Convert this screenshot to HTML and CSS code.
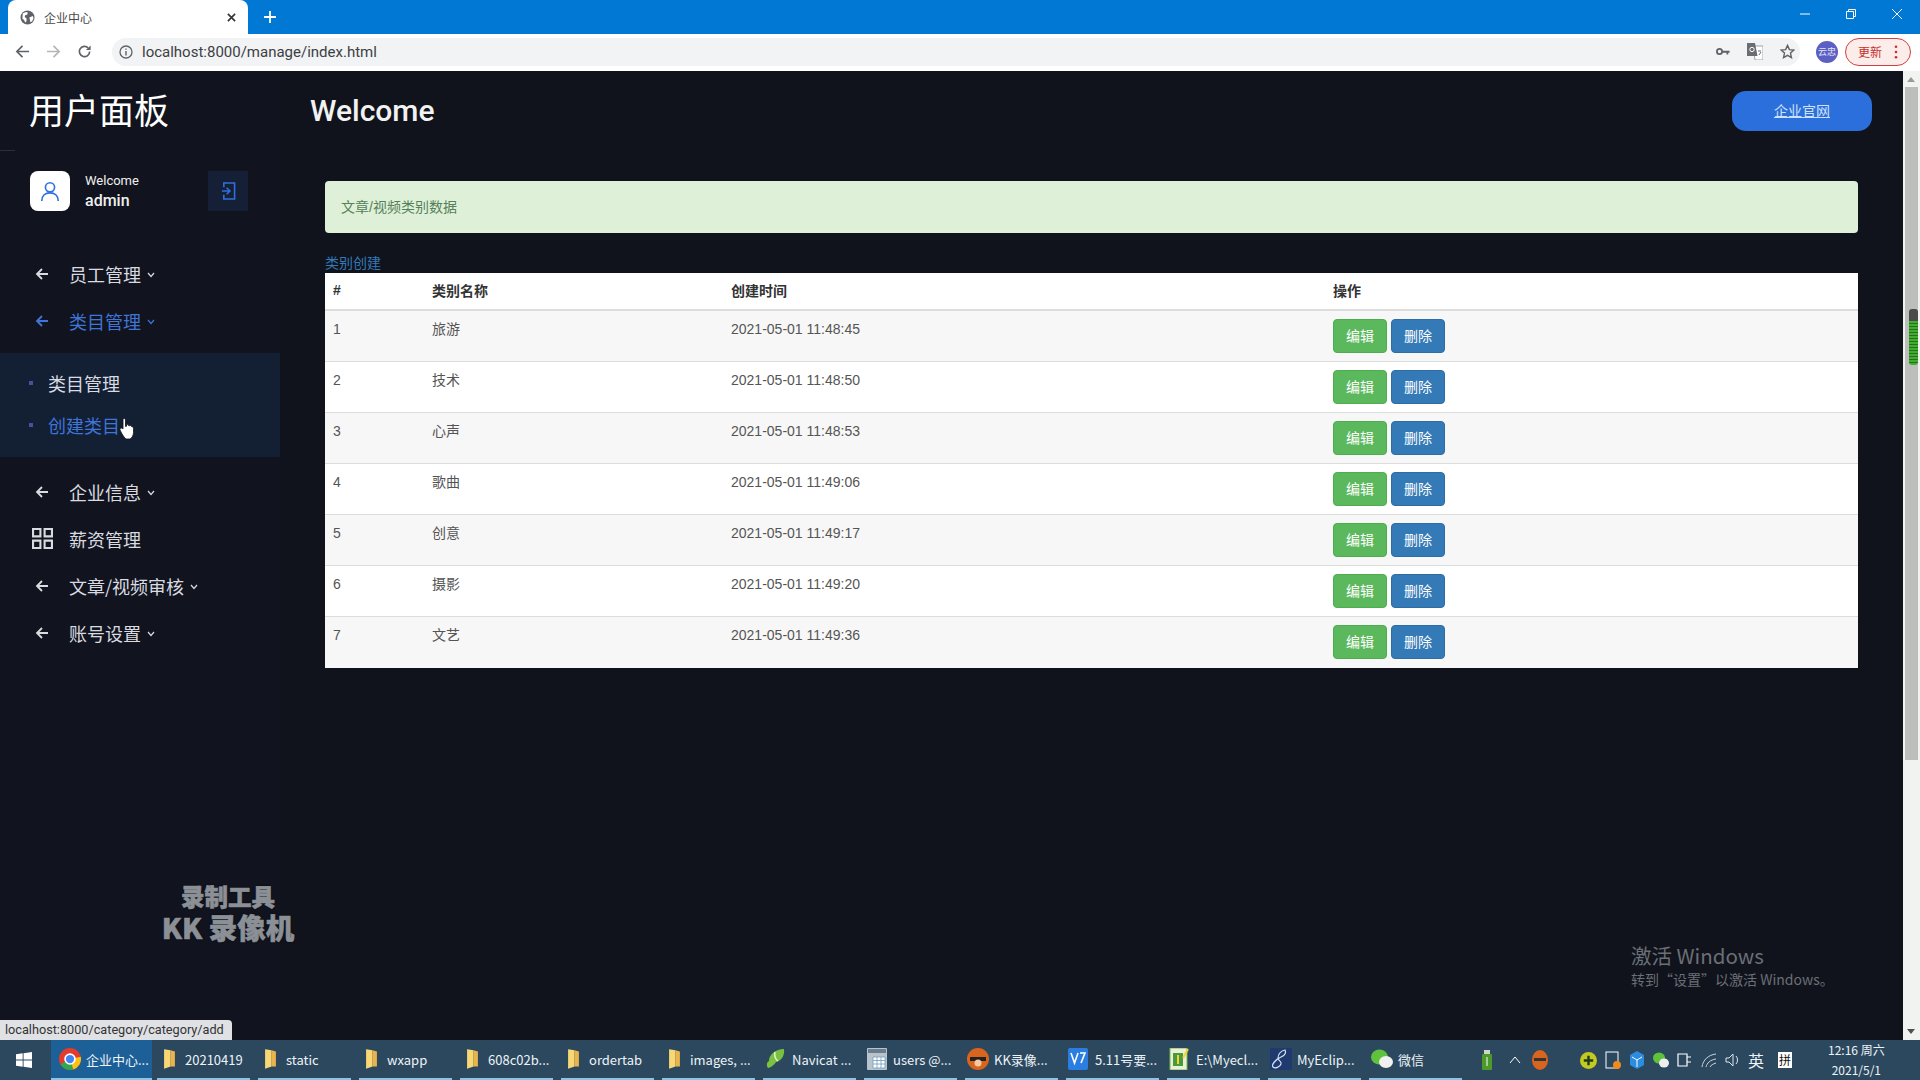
FILE: index.html
```html
<!DOCTYPE html>
<html lang="zh-CN">
  <head>
    <meta charset="UTF-8" />
    <title>企业中心</title>
    <link rel="stylesheet" href="styles.css">
  </head>
  <body>
    <!-- browser chrome -->
    <div class="tabstrip">
      <div class="tab">
        <svg class="tab-globe" viewBox="0 0 16 16"><circle cx="8" cy="8" r="7.5" fill="#5f6368"/><path d="M3 3.500l3.500-1.500 2 1-1 2-2 .5-.5 2 2 1.500v2.500l-1 2-2-3-1.500-1.500zM10 8l3.500-1.500 1 2-1.500 3.500-2 1-.5-3z" fill="#fff"/></svg>
        <span class="tab-title">企业中心</span>
        <svg class="tab-close" viewBox="0 0 10 10"><path d="M1 1l8 8M9 1l-8 8" stroke="#333" stroke-width="1.800"/></svg>
      </div>
      <svg class="tab-new" viewBox="0 0 12 12"><path d="M6 0v12M0 6h12" stroke="#fff" stroke-width="1.800"/></svg>
      <div class="win-buttons">
        <svg viewBox="0 0 12 12"><path d="M1 6h10" stroke="#fff" stroke-width="1"/></svg>
        <svg viewBox="0 0 12 12"><path d="M1.500 3.500h7v7h-7zM3.500 3.500v-2h7v7h-2" fill="none" stroke="#fff" stroke-width="1"/></svg>
        <svg viewBox="0 0 12 12"><path d="M1 1l10 10M11 1L1 11" stroke="#fff" stroke-width="1"/></svg>
      </div>
    </div>
    <div class="toolbar">
      <svg class="nav-icon" viewBox="0 0 16 16"><path d="M15 8H2M8 2L2 8l6 6" fill="none" stroke="#5f6368" stroke-width="1.800"/></svg>
      <svg class="nav-icon" viewBox="0 0 16 16"><path d="M1 8h13M8 2l6 6-6 6" fill="none" stroke="#b4b6b9" stroke-width="1.800"/></svg>
      <svg class="nav-icon" viewBox="0 0 16 16"><path d="M13.500 8a5.500 5.500 0 1 1-1.600-3.900" fill="none" stroke="#5f6368" stroke-width="1.800"/><path d="M14.500 1.500v5h-5z" fill="#5f6368"/></svg>
      <div class="omnibox">
        <svg class="info-icon" viewBox="0 0 14 14"><circle cx="7" cy="7" r="6" fill="none" stroke="#5f6368" stroke-width="1.300"/><path d="M7 6v4.500M7 3.500v1.300" stroke="#5f6368" stroke-width="1.400"/></svg>
        <span class="url">localhost:8000/manage/index.html</span>
        <div class="omni-right">
          <svg class="key-icon" viewBox="0 0 16 10"><circle cx="4" cy="5" r="3" fill="none" stroke="#5f6368" stroke-width="2"/><path d="M7 4h8.500v2.500h-1.500v2h-2v-2H7z" fill="#5f6368"/></svg>
          <svg class="trans-icon" viewBox="0 0 16 17"><path d="M6 3h10v14H8z" fill="#fff" stroke="#8a8d91" stroke-width=".8"/><path d="M0 0h8l2.500 13H0z" fill="#6a6d71"/><circle cx="5" cy="6.500" r="2.200" fill="none" stroke="#fff"/><path d="M11 8h3M12 12l2-3" stroke="#6a6d71"/></svg>
          <svg class="star-icon" viewBox="0 0 16 16"><path d="M8 1.500l2 4.500 4.800.5-3.600 3.200 1 4.800L8 12.100 3.800 14.500l1-4.800L1.200 6.500 6 6z" fill="none" stroke="#5f6368" stroke-width="1.500"/></svg>
        </div>
      </div>
      <div class="avatar-chip">云忠</div>
      <div class="update-chip">
        <span>更新</span>
        <svg viewBox="0 0 4 16"><circle cx="2" cy="2" r="1.500"/><circle cx="2" cy="8" r="1.500"/><circle cx="2" cy="14" r="1.500"/></svg>
      </div>
    </div>

    <div class="page">
      <aside class="sidebar">
        <h2 class="brand">用户面板</h2>
        <div class="brand-rule"></div>
        <div class="user-box">
          <div class="user-pic">
            <svg viewBox="0 0 24 24"><circle cx="12" cy="8" r="5" fill="none" stroke="#2f6fe0" stroke-width="1.800"/><path d="M3 23c0-6 4-9 9-9s9 3 9 9" fill="none" stroke="#2f6fe0" stroke-width="1.800"/></svg>
          </div>
          <div class="user-text">
            <span class="user-hello">Welcome</span>
            <strong class="user-name">admin</strong>
          </div>
          <div class="user-exit">
            <svg viewBox="0 0 16 20"><path d="M3 6V1.500h11.500v17H3V14M1 10h8M6 6.500L9.500 10 6 13.500" fill="none" stroke="#2f6fe0" stroke-width="1.700"/></svg>
          </div>
        </div>
        <ul class="menu">
          <li class="menu-item">
            <svg class="menu-arrow" viewBox="0 0 14 14"><path d="M13 7H2M7 2L2 7l5 5" fill="none" stroke="currentColor" stroke-width="1.800"/></svg>
            <span>员工管理</span><svg class="menu-caret" viewBox="0 0 8 6"><path d="M1 1l3 3.500L7 1" fill="none" stroke="currentColor" stroke-width="1.200"/></svg>
          </li>
          <li class="menu-item active">
            <svg class="menu-arrow" viewBox="0 0 14 14"><path d="M13 7H2M7 2L2 7l5 5" fill="none" stroke="currentColor" stroke-width="1.800"/></svg>
            <span>类目管理</span><svg class="menu-caret" viewBox="0 0 8 6"><path d="M1 1l3 3.500L7 1" fill="none" stroke="currentColor" stroke-width="1.200"/></svg>
          </li>
          <li class="submenu">
            <div class="sub-item">类目管理</div>
            <div class="sub-item current">创建类目</div>
          </li>
          <li class="menu-item">
            <svg class="menu-arrow" viewBox="0 0 14 14"><path d="M13 7H2M7 2L2 7l5 5" fill="none" stroke="currentColor" stroke-width="1.800"/></svg>
            <span>企业信息</span><svg class="menu-caret" viewBox="0 0 8 6"><path d="M1 1l3 3.500L7 1" fill="none" stroke="currentColor" stroke-width="1.200"/></svg>
          </li>
          <li class="menu-item">
            <svg class="menu-grid" viewBox="0 0 20 20"><path d="M1 1h7v7H1zM12 1h7v7h-7zM1 12h7v7H1zM12 12h7v7h-7z" fill="none" stroke="currentColor" stroke-width="2"/></svg>
            <span>薪资管理</span>
          </li>
          <li class="menu-item">
            <svg class="menu-arrow" viewBox="0 0 14 14"><path d="M13 7H2M7 2L2 7l5 5" fill="none" stroke="currentColor" stroke-width="1.800"/></svg>
            <span>文章/视频审核</span><svg class="menu-caret" viewBox="0 0 8 6"><path d="M1 1l3 3.500L7 1" fill="none" stroke="currentColor" stroke-width="1.200"/></svg>
          </li>
          <li class="menu-item">
            <svg class="menu-arrow" viewBox="0 0 14 14"><path d="M13 7H2M7 2L2 7l5 5" fill="none" stroke="currentColor" stroke-width="1.800"/></svg>
            <span>账号设置</span><svg class="menu-caret" viewBox="0 0 8 6"><path d="M1 1l3 3.500L7 1" fill="none" stroke="currentColor" stroke-width="1.200"/></svg>
          </li>
        </ul>
      </aside>

      <main class="content">
        <header class="content-head">
          <h1>Welcome</h1>
          <a class="site-btn">企业官网</a>
        </header>
        <div class="content-body">
          <div class="alert">文章/视频类别数据</div>
          <a class="add-link">类别创建</a>
          <table class="data-table">
            <thead>
              <tr><th class="col-id">#</th><th class="col-name">类别名称</th><th class="col-time">创建时间</th><th>操作</th></tr>
            </thead>
            <tbody>
              <tr><td>1</td><td>旅游</td><td>2021-05-01 11:48:45</td><td><a class="btn btn-success">编辑</a> <a class="btn btn-primary">删除</a></td></tr>
              <tr><td>2</td><td>技术</td><td>2021-05-01 11:48:50</td><td><a class="btn btn-success">编辑</a> <a class="btn btn-primary">删除</a></td></tr>
              <tr><td>3</td><td>心声</td><td>2021-05-01 11:48:53</td><td><a class="btn btn-success">编辑</a> <a class="btn btn-primary">删除</a></td></tr>
              <tr><td>4</td><td>歌曲</td><td>2021-05-01 11:49:06</td><td><a class="btn btn-success">编辑</a> <a class="btn btn-primary">删除</a></td></tr>
              <tr><td>5</td><td>创意</td><td>2021-05-01 11:49:17</td><td><a class="btn btn-success">编辑</a> <a class="btn btn-primary">删除</a></td></tr>
              <tr><td>6</td><td>摄影</td><td>2021-05-01 11:49:20</td><td><a class="btn btn-success">编辑</a> <a class="btn btn-primary">删除</a></td></tr>
              <tr><td>7</td><td>文艺</td><td>2021-05-01 11:49:36</td><td><a class="btn btn-success">编辑</a> <a class="btn btn-primary">删除</a></td></tr>
            </tbody>
          </table>
        </div>
      </main>

      <div class="scrollbar">
        <div class="scroll-up"></div>
        <div class="scroll-thumb"><div class="scroll-grip"></div></div>
        <div class="scroll-down"></div>
      </div>

      <!-- things lying over the page -->
      <div class="cursor">
        <svg viewBox="0 0 16 22"><path d="M4 1.500c1-1 2.500-.5 2.500 1V9l1-.3V7.500c1-.8 2-.3 2 .5l1 .2c1-.5 2 0 2 .8l.8.3c.9.200 1.200 1 1.200 2v3.700c0 2.500-1.500 5.500-3.500 6.500H7c-1.500-1-3-3.500-4.500-6L1 12.500c-.5-1.500 1-2.500 2.500-1.500l.5.500z" fill="#fff" stroke="#111" stroke-width=".8"/></svg>
      </div>
      <div class="watermark">
        <div class="wm-top">录制工具</div>
        <div class="wm-main">KK 录像机</div>
      </div>
      <div class="activate">
        <div class="act-title">激活 Windows</div>
        <div class="act-sub">转到“设置”以激活 Windows。</div>
      </div>
      <div class="status-tip">localhost:8000/category/category/add</div>
    </div>

    <footer class="taskbar">
      <svg class="start" viewBox="0 0 18 18"><path d="M0 2.500l7.500-1V8.500H0zM8.500 1.300L18 0v8.500H8.500zM0 9.500h7.500v7L0 15.500zM8.500 9.500H18V18l-9.500-1.300z" fill="#fff"/></svg>
      <div class="task active">
        <svg class="task-icon" viewBox="0 0 20 20"><circle cx="10" cy="10" r="10" fill="#e33b2e"/><path d="M10 10L1.300 15A10 10 0 0 0 13 19.500z" fill="#2fa84f"/><path d="M10 10l3 9.500A10 10 0 0 0 19.800 8z" fill="#fbc116"/><circle cx="10" cy="10" r="4.500" fill="#4285f4" stroke="#fff" stroke-width="1.500"/></svg>
        <span>企业中心...</span>
      </div>
      <div class="task"><svg class="task-icon folder" viewBox="0 0 12 20"><path d="M1 1l6 1v15l-6 2z" fill="#f8d775"/><path d="M7 2l4 1v14H7z" fill="#e9b44c"/></svg><span>20210419</span></div>
      <div class="task"><svg class="task-icon folder" viewBox="0 0 12 20"><path d="M1 1l6 1v15l-6 2z" fill="#f8d775"/><path d="M7 2l4 1v14H7z" fill="#e9b44c"/></svg><span>static</span></div>
      <div class="task"><svg class="task-icon folder" viewBox="0 0 12 20"><path d="M1 1l6 1v15l-6 2z" fill="#f8d775"/><path d="M7 2l4 1v14H7z" fill="#e9b44c"/></svg><span>wxapp</span></div>
      <div class="task"><svg class="task-icon folder" viewBox="0 0 12 20"><path d="M1 1l6 1v15l-6 2z" fill="#f8d775"/><path d="M7 2l4 1v14H7z" fill="#e9b44c"/></svg><span>608c02b...</span></div>
      <div class="task"><svg class="task-icon folder" viewBox="0 0 12 20"><path d="M1 1l6 1v15l-6 2z" fill="#f8d775"/><path d="M7 2l4 1v14H7z" fill="#e9b44c"/></svg><span>ordertab</span></div>
      <div class="task"><svg class="task-icon folder" viewBox="0 0 12 20"><path d="M1 1l6 1v15l-6 2z" fill="#f8d775"/><path d="M7 2l4 1v14H7z" fill="#e9b44c"/></svg><span>images, ...</span></div>
      <div class="task"><svg class="task-icon" viewBox="0 0 20 22"><path d="M3 13C3 6 10 1 18 1c1 7-3 12-8 13-3 5-8 6-8 6-2-3-1-6 1-7z" fill="#7ac142"/><path d="M9 4c-1 3 0 7 3 9" fill="none" stroke="#e8f5d0" stroke-width="1.500"/></svg><span>Navicat ...</span></div>
      <div class="task"><svg class="task-icon" viewBox="0 0 20 22"><rect width="20" height="22" rx="1" fill="#b9c3cc"/><rect x="1" y="1" width="18" height="4" fill="#6a7d8c"/><path d="M6 9h12v11H6zM6 12.500h12M6 16h12M10 9v11M14 9v11" fill="#fff" stroke="#6f9dbf" stroke-width=".8"/></svg><span>users @...</span></div>
      <div class="task"><svg class="task-icon" viewBox="0 0 22 22"><circle cx="11" cy="11" r="11" fill="#d9641e"/><path d="M3 9h16v4H3z" fill="#222"/><circle cx="11" cy="15" r="3.500" fill="#f2c9a0"/></svg><span>KK录像...</span></div>
      <div class="task"><svg class="task-icon" viewBox="0 0 22 22"><rect width="20" height="22" rx="2" fill="#2a7de1"/><path d="M3 5l3.500 10L10 5M12 5h5l-4 10" fill="none" stroke="#fff" stroke-width="1.600"/></svg><span>5.11号要...</span></div>
      <div class="task"><svg class="task-icon" viewBox="0 0 20 22"><rect width="17" height="22" fill="#e8f0d8" stroke="#7ab648"/><rect x="3" y="5" width="10" height="13" fill="#4a9a3c"/><path d="M8 7v9M18 1l-5 9" stroke="#f1d33c" stroke-width="2"/></svg><span>E:\Myecl...</span></div>
      <div class="task"><svg class="task-icon" viewBox="0 0 22 22"><rect width="22" height="22" fill="#1e3a6e"/><path d="M15 2c-5 1-7 5-7 8s4 3 3 6-6 5-8 3 3-8 8-10 5-5 4-7z" fill="none" stroke="#d5e3f5" stroke-width="1.200"/></svg><span>MyEclip...</span></div>
      <div class="task"><svg class="task-icon" viewBox="0 0 22 22"><ellipse cx="8.500" cy="9" rx="8.500" ry="7.500" fill="#5fc23c"/><ellipse cx="15" cy="14" rx="7" ry="6" fill="#f0f0f0"/></svg><span>微信</span></div>
      <div class="tray">
        <svg class="tray-usb" viewBox="0 0 10 20"><rect x="2" y="0" width="6" height="4" fill="#cdd5cc"/><rect y="4" width="10" height="16" rx="1" fill="#4c9a2a"/><path d="M5 7v9" stroke="#fff"/></svg>
        <svg class="tray-up" viewBox="0 0 12 8"><path d="M1 7l5-6 5 6" fill="none" stroke="#fff"/></svg>
        <svg class="tray-kk" viewBox="0 0 16 20"><ellipse cx="8" cy="10" rx="8" ry="10" fill="#d9641e"/><path d="M2 8h12v3H2z" fill="#333"/></svg>
        <svg class="tray-plus" viewBox="0 0 18 18"><circle cx="9" cy="9" r="9" fill="#c6c91f"/><path d="M9 4v10M4 9h10" stroke="#1c3a22" stroke-width="2.500"/></svg>
        <svg class="tray-icon" viewBox="0 0 16 18"><rect x="1" y="1" width="12" height="16" fill="none" stroke="#fff"/><circle cx="12" cy="14" r="4" fill="#f08a1c"/></svg>
        <svg class="tray-icon" viewBox="0 0 16 18"><path d="M8 0l7 4v10l-7 4-7-4V4z" fill="#2c8de0"/><path d="M3 6l5 3 5-3M8 9v7" stroke="#fff" fill="none"/></svg>
        <svg class="tray-icon" viewBox="0 0 16 18"><ellipse cx="6" cy="7" rx="6" ry="5.500" fill="#5fc23c"/><ellipse cx="11" cy="12" rx="5" ry="4.500" fill="#eee"/></svg>
        <svg class="tray-icon" viewBox="0 0 16 18"><path d="M1 3h9v12H1zM10 6h4M10 11h4" fill="none" stroke="#fff" stroke-width="1.200"/></svg>
        <svg class="tray-icon" viewBox="0 0 16 18"><path d="M1 16C2 9 7 4 15 3M5 16c1-4 4-7 10-8M9 16c1-2 3-3 6-4" fill="none" stroke="#ccd4da" stroke-width="1"/></svg>
        <svg class="tray-icon" viewBox="0 0 16 18"><path d="M1 7h3l4-4v12l-4-4H1zM11 5c2 2 2 6 0 8" fill="none" stroke="#dfe5e9" stroke-width="1"/></svg>
        <span class="tray-lang">英</span>
        <span class="tray-pin">拼</span>
        <div class="clock"><div>12:16 周六</div><div>2021/5/1</div></div>
      </div>
    </footer>
  </body>
</html>
```

FILE: styles.css
```css
* {
  box-sizing: border-box;
}
html,
body {
  margin: 0;
  height: 100%;
  overflow: hidden;
}
body {
  width: 1920px;
  height: 1080px;
  display: flex;
  flex-direction: column;
  font-family: "Liberation Sans", "Noto Sans CJK SC", sans-serif;
  font-size: 14px;
  color: #333;
}
ul {
  list-style: none;
  margin: 0;
  padding: 0;
}
h1,
h2 {
  margin: 0;
  font-weight: 400;
}

/* browser chrome */
.tabstrip {
  height: 34px;
  flex: none;
  background: #0078d4;
  display: flex;
  align-items: flex-end;
}
.tab {
  width: 240px;
  height: 34px;
  margin-left: 8px;
  padding: 0 12px;
  background: #fff;
  border-radius: 8px 8px 0 0;
  display: flex;
  align-items: center;
}
.tab-globe {
  width: 15px;
  height: 15px;
}
.tab-title {
  margin-left: 9px;
  font-size: 12px;
  color: #4a4a4a;
}
.tab-close {
  width: 9px;
  height: 9px;
  margin-left: auto;
}
.tab-new {
  width: 12px;
  height: 12px;
  margin: 0 0 11px 16px;
}
.win-buttons {
  margin-left: auto;
  height: 34px;
  display: flex;
  align-items: center;
  gap: 34px;
  padding-right: 17px;
}
.win-buttons svg {
  width: 12px;
  height: 12px;
  margin-top: -6px;
}
.toolbar {
  height: 37px;
  flex: none;
  background: #fff;
  display: flex;
  align-items: center;
  padding: 0 0 2px 15px;
  gap: 16px;
}
.nav-icon {
  width: 15px;
  height: 15px;
}
.omnibox {
  width: 1688px;
  height: 28px;
  margin-left: 4px;
  background: #f1f3f4;
  border-radius: 14px;
  display: flex;
  align-items: center;
  padding-left: 7px;
}
.info-icon {
  width: 14px;
  height: 14px;
}
.url {
  margin-left: 9px;
  font-family: "Roboto", sans-serif;
  font-size: 15px;
  color: #3c4043;
}
.omni-right {
  margin-left: auto;
  margin-right: 5px;
  display: flex;
  align-items: center;
  gap: 17px;
}
.key-icon {
  width: 14px;
  height: 9px;
}
.trans-icon {
  width: 16px;
  height: 17px;
}
.star-icon {
  width: 15px;
  height: 15px;
}
.avatar-chip {
  width: 22px;
  height: 22px;
  border-radius: 50%;
  background: #5c5fc4;
  color: #e6e6f5;
  font-size: 9px;
  line-height: 22px;
  text-align: center;
}
.update-chip {
  width: 66px;
  height: 28px;
  margin-left: -9px;
  border: 1px solid #d04040;
  border-radius: 14px;
  background: #fcecea;
  color: #c5302a;
  font-size: 12px;
  display: flex;
  align-items: center;
  justify-content: space-between;
  padding: 0 12px;
}
.update-chip svg {
  width: 4px;
  height: 14px;
  fill: #c5302a;
}

/* page */
.page {
  flex: 1;
  min-height: 0;
  display: flex;
  position: relative;
  background: #10131c;
}
.sidebar {
  width: 280px;
  flex: none;
  padding-top: 13px;
  background: #11141e;
}
.brand {
  margin-left: 29px;
  font-family: "Noto Sans CJK SC", sans-serif;
  font-size: 35px;
  line-height: 50px;
  color: #fff;
}
.brand-rule {
  width: 15px;
  height: 1px;
  margin-top: 16px;
  background: #2c2f38;
}
.user-box {
  margin: 20px 32px 0 30px;
  height: 40px;
  display: flex;
  align-items: center;
}
.user-pic {
  width: 40px;
  height: 40px;
  background: #fff;
  border-radius: 8px;
  display: flex;
  justify-content: center;
  align-items: center;
}
.user-pic svg {
  width: 22px;
  height: 24px;
}
.user-text {
  margin: 2px 0 0 15px;
  display: flex;
  flex-direction: column;
  color: #f0f0f0;
}
.user-hello {
  font-family: "Roboto", sans-serif;
  font-size: 13px;
  line-height: 18px;
}
.user-name {
  font-family: "Roboto", sans-serif;
  font-size: 16px;
  font-weight: 500;
  line-height: 22px;
}
.user-exit {
  width: 40px;
  height: 40px;
  margin-left: auto;
  background: #152036;
  display: flex;
  justify-content: center;
  align-items: center;
}
.user-exit svg {
  width: 15px;
  height: 20px;
}
.menu {
  margin-top: 39px;
}
.menu-item {
  height: 47px;
  padding-left: 35px;
  display: flex;
  align-items: center;
  font-family: "Noto Sans CJK SC", sans-serif;
  font-size: 18px;
  color: #d9dbe0;
}
.menu-item.active {
  color: #3f74d8;
}
.menu-arrow {
  width: 14px;
  height: 14px;
  margin-right: 20px;
}
.menu-grid {
  width: 21px;
  height: 21px;
  margin: 0 16px 0 -3px;
}
.menu-caret {
  width: 8px;
  height: 6px;
  margin: 3px 0 0 6px;
}
.submenu {
  width: 280px;
  height: 104px;
  margin-top: 9px;
  margin-bottom: 11px;
  padding-top: 10px;
  background: #131f33;
}
.sub-item {
  height: 42px;
  padding-left: 48px;
  position: relative;
  font-family: "Noto Sans CJK SC", sans-serif;
  font-size: 18px;
  line-height: 41px;
  color: #d9dbe0;
}
.sub-item::before {
  content: "";
  position: absolute;
  left: 29px;
  top: 18px;
  width: 4px;
  height: 4px;
  background: #4a4f9e;
}
.sub-item.current {
  color: #3f74d8;
}
.content {
  flex: 1;
  min-width: 0;
  padding: 20px 31px 0 30px;
}
.content-head {
  height: 40px;
  display: flex;
  justify-content: space-between;
  align-items: center;
}
.content-head h1 {
  margin-top: -2px;
  font-family: "Roboto", sans-serif;
  font-size: 30px;
  font-weight: 500;
  color: #f2f2f2;
}
.site-btn {
  width: 140px;
  height: 40px;
  margin-left: 1px;
  background: #2a6fdc;
  border-radius: 14px;
  color: #cfe0fa;
  font-size: 14px;
  line-height: 40px;
  text-align: center;
  text-decoration: underline;
}
.content-body {
  padding: 50px 14px 0 15px;
}
.alert {
  height: 52px;
  padding: 0 16px;
  background: #dff0d8;
  border-radius: 4px;
  color: #55805a;
  line-height: 52px;
}
.add-link {
  display: block;
  height: 20px;
  margin-top: 20px;
  color: #337ab7;
  line-height: 20px;
}
.data-table {
  width: 100%;
  border-collapse: collapse;
  table-layout: fixed;
  background: #fff;
}
.data-table th {
  height: 37px;
  padding: 0 8px 2px;
  text-align: left;
  font-weight: 700;
  font-size: 14px;
  color: #333;
  border-bottom: 2px solid #ddd;
}
.data-table td {
  height: 51px;
  padding: 8px;
  vertical-align: top;
  line-height: 20px;
  color: #555;
  border-bottom: 1px solid #ddd;
}
.data-table tbody tr:nth-child(odd) {
  background: #f7f7f7;
}
.data-table tbody tr:last-child td {
  border-bottom: 0;
}
.col-id {
  width: 99px;
}
.col-name {
  width: 299px;
}
.col-time {
  width: 602px;
}
.btn {
  display: inline-block;
  padding: 6px 12px;
  border: 1px solid transparent;
  border-radius: 4px;
  color: #fff;
  line-height: 20px;
}
.btn-success {
  background: #5cb85c;
  border-color: #4cae4c;
}
.btn-primary {
  background: #337ab7;
  border-color: #2e6da4;
}
.scrollbar {
  width: 17px;
  flex: none;
  background: #f1f3f0;
  display: flex;
  flex-direction: column;
  align-items: center;
  position: relative;
}
.scroll-up,
.scroll-down {
  position: absolute;
  left: 4px;
  width: 0;
  height: 0;
  border-left: 4px solid transparent;
  border-right: 4px solid transparent;
}
.scroll-up {
  top: 6px;
  border-bottom: 5px solid #9a9a9a;
}
.scroll-down {
  bottom: 6px;
  border-top: 5px solid #505050;
}
.scroll-thumb {
  width: 13px;
  height: 673px;
  margin-top: 16px;
  padding-top: 222px;
  background: #bcbebb;
  display: flex;
  justify-content: flex-end;
}
.scroll-grip {
  width: 9px;
  height: 56px;
  border-radius: 3px;
  background: repeating-linear-gradient(#3fae2c 0 2px, #2b6d22 2px 3px);
  border-top: 12px solid #4a4a4a;
}
.cursor {
  position: absolute;
  left: 119px;
  top: 346px;
  width: 16px;
  height: 23px;
}
.cursor svg {
  display: block;
  width: 100%;
  height: 100%;
}
.watermark {
  position: absolute;
  left: 140px;
  top: 811px;
  width: 176px;
  text-align: center;
  font-family: "Noto Sans CJK SC", sans-serif;
  font-weight: 900;
  color: #8b8f96;
  -webkit-text-stroke: .6px #8b8f96;
  text-shadow: 0 0 2px #000;
}
.wm-top {
  font-size: 23.500px;
  line-height: 28px;
}
.wm-main {
  font-size: 28.500px;
  line-height: 34px;
}
.activate {
  position: absolute;
  left: 1631px;
  top: 871px;
  color: #6b6f76;
  font-family: "Noto Sans CJK SC", sans-serif;
}
.act-title {
  font-size: 20.500px;
  line-height: 27px;
}
.act-sub {
  font-size: 14px;
  line-height: 20px;
}
.status-tip {
  position: absolute;
  left: 0;
  bottom: 0;
  height: 20px;
  width: 232px;
  padding-left: 5px;
  background: #dfe1e5;
  border-top-right-radius: 4px;
  color: #333;
  font-family: "Roboto", sans-serif;
  font-size: 12.700px;
  line-height: 20px;
}

/* windows taskbar */
.taskbar {
  height: 40px;
  flex: none;
  background: #2b485f;
  display: flex;
  align-items: stretch;
  color: #eef3f7;
  font-family: "Noto Sans CJK SC", sans-serif;
  font-size: 13px;
}
.start {
  width: 16px;
  height: 16px;
  margin: 12px 19px 0 16px;
}
.task {
  width: 93px;
  margin-right: 8px;
  padding-left: 2px;
  flex: none;
  display: flex;
  align-items: center;
  gap: 5px;
  border-bottom: 2px solid #8fc3e4;
  white-space: nowrap;
  overflow: hidden;
}
.task.active {
  width: 101px;
  margin-right: 5px;
  padding-left: 8px;
  background: #1d5f97;
}
.task-icon {
  width: 22px;
  height: 22px;
  flex: none;
}
.task-icon.folder {
  width: 13px;
  margin: 0 4px 0 4px;
}
.tray {
  flex: 1;
  display: flex;
  align-items: center;
  padding-left: 12px;
}
.tray-usb {
  width: 10px;
  height: 20px;
}
.tray-up {
  width: 12px;
  height: 8px;
  margin-left: 17px;
}
.tray-kk {
  width: 16px;
  height: 20px;
  margin-left: 11px;
}
.tray-plus {
  width: 17px;
  height: 17px;
  margin-left: 32px;
}
.tray-icon {
  width: 16px;
  height: 18px;
  margin-left: 8px;
}
.tray-lang {
  margin-left: 7px;
  font-size: 16px;
}
.tray-pin {
  width: 14px;
  height: 16px;
  margin-left: 14px;
  background: #fff;
  color: #111;
  font-size: 12px;
  line-height: 16px;
  text-align: center;
}
.clock {
  margin-left: 36px;
  font-size: 12px;
  line-height: 20px;
  text-align: center;
}
```
